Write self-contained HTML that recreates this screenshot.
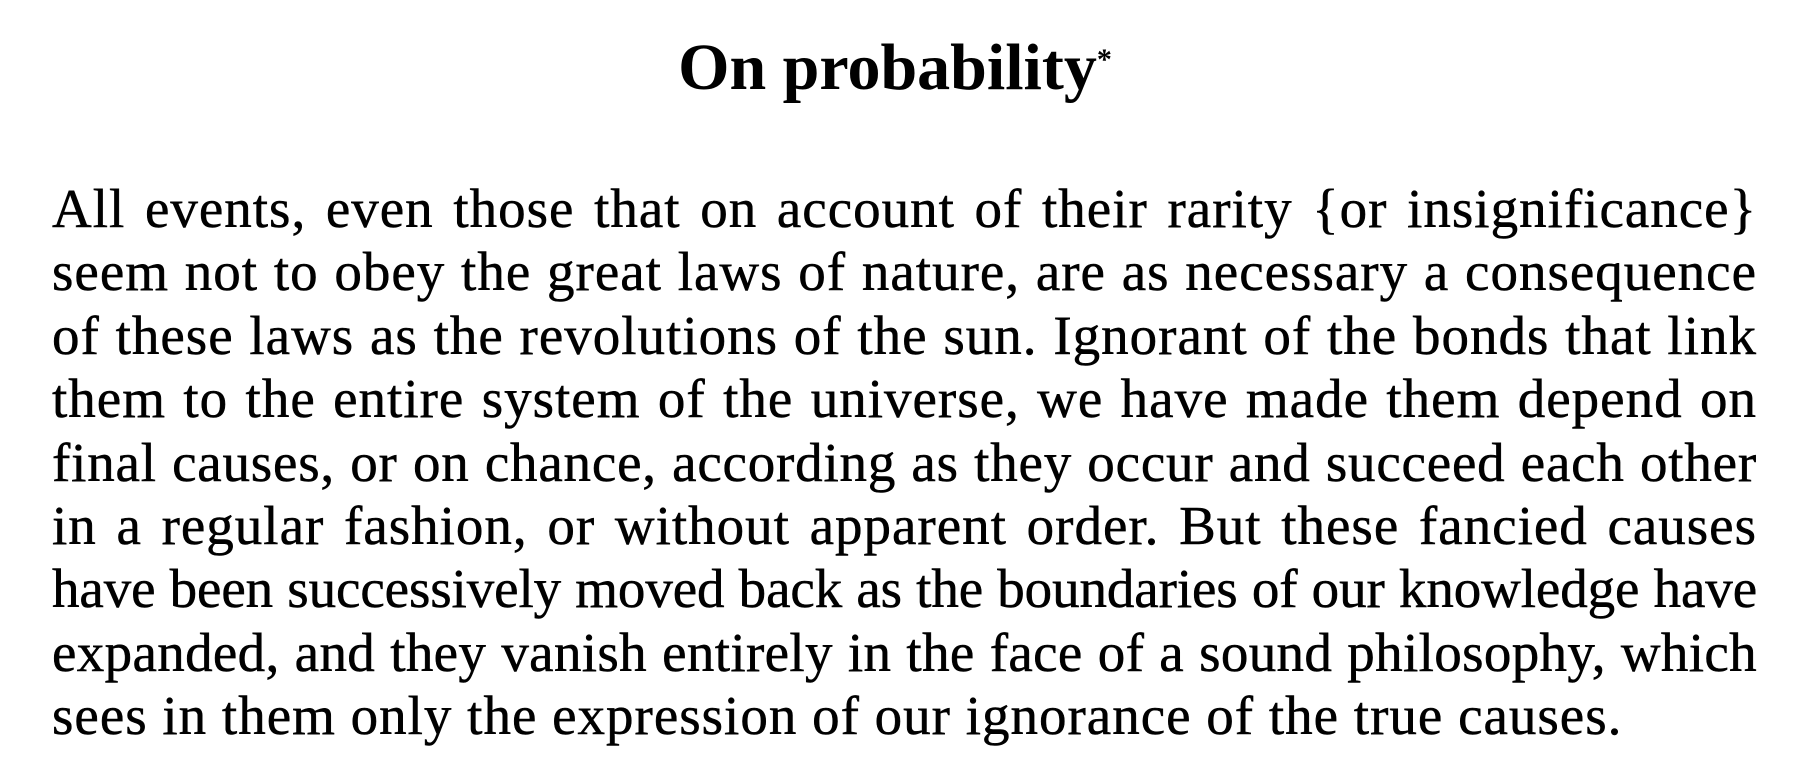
<!DOCTYPE html>
<html><head><style>
html,body{margin:0;padding:0;background:#fff;}
body{width:1818px;height:768px;position:relative;overflow:hidden;font-family:"Liberation Serif",serif;color:#000;}
.title{position:absolute;left:0;width:1790px;text-align:center;top:28px;font-size:66px;font-weight:bold;line-height:80px;}
.title sup{font-size:30px;position:relative;top:-8px;vertical-align:top;}
.body{position:absolute;left:52px;width:1705px;top:177px;font-size:55px;letter-spacing:1px;-webkit-text-stroke:0.5px #000;}
.l{height:63.4px;line-height:63.4px;text-align:justify;text-align-last:justify;white-space:nowrap;}
.l.last{text-align-last:left;}
</style></head><body>
<div class="title">On probability<sup>*</sup></div>
<div class="body">
<div class="l">All events, even those that on account of their rarity {or insignificance}</div>
<div class="l">seem not to obey the great laws of nature, are as necessary a consequence</div>
<div class="l">of these laws as the revolutions of the sun. Ignorant of the bonds that link</div>
<div class="l">them to the entire system of the universe, we have made them depend on</div>
<div class="l" style="letter-spacing:0.8px">final causes, or on chance, according as they occur and succeed each other</div>
<div class="l">in a regular fashion, or without apparent order. But these fancied causes</div>
<div class="l" style="letter-spacing:-0.1px">have been successively moved back as the boundaries of our knowledge have</div>
<div class="l" style="letter-spacing:0.35px">expanded, and they vanish entirely in the face of a sound philosophy, which</div>
<div class="l last">sees in them only the expression of our ignorance of the true causes.</div>
</div>
</body></html>
